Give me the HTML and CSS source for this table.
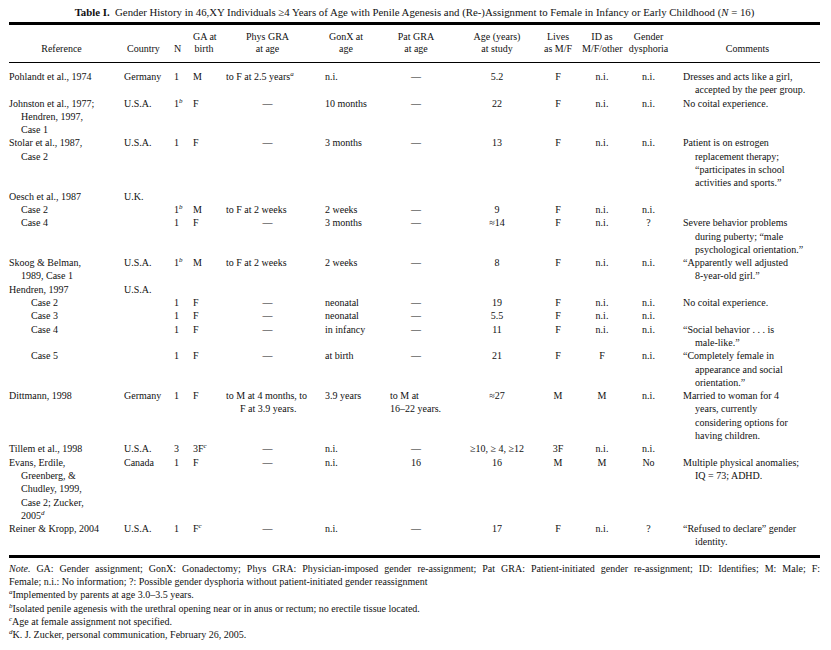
FILE: index.html
```html
<!DOCTYPE html>
<html lang="en">
<head>
    <meta charset="UTF-8">
    <title>Table I</title>
    <link rel="stylesheet" href="styles.css">
</head>

<body>

    <div class="m_page">
        <p class="m_title"><b>Table I.</b>&nbsp; Gender History in 46,XY Individuals &ge;4 Years of Age with Penile Agenesis and (Re-)Assignment to Female in Infancy or Early Childhood (<i>N</i> = 16)</p>

        <table class="m_table">
            <colgroup>
                <col class="c_ref"><col class="c_country"><col class="c_n"><col class="c_ga"><col class="c_phys"><col class="c_gonx">
                <col class="c_pat"><col class="c_age"><col class="c_lives"><col class="c_id"><col class="c_dys"><col class="c_com">
            </colgroup>
            <thead>
                <tr>
                    <th class="h_ref">Reference</th>
                    <th class="h_country">Country</th>
                    <th class="h_n">N</th>
                    <th>GA at<br>birth</th>
                    <th>Phys GRA<br>at age</th>
                    <th>GonX at<br>age</th>
                    <th>Pat GRA<br>at age</th>
                    <th>Age (years)<br>at study</th>
                    <th>Lives<br>as M/F</th>
                    <th>ID as<br>M/F/other</th>
                    <th>Gender<br>dysphoria</th>
                    <th>Comments</th>
                </tr>
            </thead>
            <tbody>
                <tr class="first">
                    <td class="hang">Pohlandt et al., 1974</td><td>Germany</td><td>1</td><td>M</td>
                    <td class="l">to F at 2.5 years<sup>a</sup></td><td class="g">n.i.</td><td class="c">&mdash;</td>
                    <td class="c">5.2</td><td class="c">F</td><td class="c">n.i.</td><td class="c">n.i.</td>
                    <td class="hang com">Dresses and acts like a girl,<br>accepted by the peer group.</td>
                </tr>
                <tr>
                    <td class="hang">Johnston et al., 1977;<br>Hendren, 1997,<br>Case 1</td><td>U.S.A.</td><td>1<sup>b</sup></td><td>F</td>
                    <td class="c">&mdash;</td><td class="g">10 months</td><td class="c">&mdash;</td>
                    <td class="c">22</td><td class="c">F</td><td class="c">n.i.</td><td class="c">n.i.</td>
                    <td class="hang com">No coital experience.</td>
                </tr>
                <tr>
                    <td class="hang">Stolar et al., 1987,<br>Case 2</td><td>U.S.A.</td><td>1</td><td>F</td>
                    <td class="c">&mdash;</td><td class="g">3 months</td><td class="c">&mdash;</td>
                    <td class="c">13</td><td class="c">F</td><td class="c">n.i.</td><td class="c">n.i.</td>
                    <td class="hang com">Patient is on estrogen<br>replacement therapy;<br>&ldquo;participates in school<br>activities and sports.&rdquo;</td>
                </tr>
                <tr>
                    <td class="hang">Oesch et al., 1987</td><td>U.K.</td><td></td><td></td>
                    <td></td><td></td><td></td><td></td><td></td><td></td><td></td><td></td>
                </tr>
                <tr>
                    <td class="sub">Case 2</td><td></td><td>1<sup>b</sup></td><td>M</td>
                    <td class="l">to F at 2 weeks</td><td class="g">2 weeks</td><td class="c">&mdash;</td>
                    <td class="c">9</td><td class="c">F</td><td class="c">n.i.</td><td class="c">n.i.</td>
                    <td></td>
                </tr>
                <tr>
                    <td class="sub">Case 4</td><td></td><td>1</td><td>F</td>
                    <td class="c">&mdash;</td><td class="g">3 months</td><td class="c">&mdash;</td>
                    <td class="c">&asymp;14</td><td class="c">F</td><td class="c">n.i.</td><td class="c">?</td>
                    <td class="hang com">Severe behavior problems<br>during puberty; &ldquo;male<br>psychological orientation.&rdquo;</td>
                </tr>
                <tr>
                    <td class="hang">Skoog &amp; Belman,<br>1989, Case 1</td><td>U.S.A.</td><td>1<sup>b</sup></td><td>M</td>
                    <td class="l">to F at 2 weeks</td><td class="g">2 weeks</td><td class="c">&mdash;</td>
                    <td class="c">8</td><td class="c">F</td><td class="c">n.i.</td><td class="c">n.i.</td>
                    <td class="hang com">&ldquo;Apparently well adjusted<br>8-year-old girl.&rdquo;</td>
                </tr>
                <tr>
                    <td class="hang">Hendren, 1997</td><td>U.S.A.</td><td></td><td></td>
                    <td></td><td></td><td></td><td></td><td></td><td></td><td></td><td></td>
                </tr>
                <tr>
                    <td class="sub2">Case 2</td><td></td><td>1</td><td>F</td>
                    <td class="c">&mdash;</td><td class="g">neonatal</td><td class="c">&mdash;</td>
                    <td class="c">19</td><td class="c">F</td><td class="c">n.i.</td><td class="c">n.i.</td>
                    <td class="hang com">No coital experience.</td>
                </tr>
                <tr>
                    <td class="sub2">Case 3</td><td></td><td>1</td><td>F</td>
                    <td class="c">&mdash;</td><td class="g">neonatal</td><td class="c">&mdash;</td>
                    <td class="c">5.5</td><td class="c">F</td><td class="c">n.i.</td><td class="c">n.i.</td>
                    <td></td>
                </tr>
                <tr>
                    <td class="sub2">Case 4</td><td></td><td>1</td><td>F</td>
                    <td class="c">&mdash;</td><td class="g">in infancy</td><td class="c">&mdash;</td>
                    <td class="c">11</td><td class="c">F</td><td class="c">n.i.</td><td class="c">n.i.</td>
                    <td class="hang com">&ldquo;Social behavior . . . is<br>male-like.&rdquo;</td>
                </tr>
                <tr>
                    <td class="sub2">Case 5</td><td></td><td>1</td><td>F</td>
                    <td class="c">&mdash;</td><td class="g">at birth</td><td class="c">&mdash;</td>
                    <td class="c">21</td><td class="c">F</td><td class="c">F</td><td class="c">n.i.</td>
                    <td class="hang com">&ldquo;Completely female in<br>appearance and social<br>orientation.&rdquo;</td>
                </tr>
                <tr>
                    <td class="hang">Dittmann, 1998</td><td>Germany</td><td>1</td><td>F</td>
                    <td class="l hang2">to M at 4 months, to<br>F at 3.9 years.</td><td class="g">3.9 years</td><td class="pat">to M at<br>16&ndash;22 years.</td>
                    <td class="c">&asymp;27</td><td class="c">M</td><td class="c">M</td><td class="c">n.i.</td>
                    <td class="hang com">Married to woman for 4<br>years, currently<br>considering options for<br>having children.</td>
                </tr>
                <tr>
                    <td class="hang">Tillem et al., 1998</td><td>U.S.A.</td><td>3</td><td>3F<sup>c</sup></td>
                    <td class="c">&mdash;</td><td class="g">n.i.</td><td class="c">&mdash;</td>
                    <td class="c">&ge;10, &ge; 4, &ge;12</td><td class="c">3F</td><td class="c">n.i.</td><td class="c">n.i.</td>
                    <td></td>
                </tr>
                <tr>
                    <td class="hang">Evans, Erdile,<br>Greenberg, &amp;<br>Chudley, 1999,<br>Case 2; Zucker,<br>2005<sup>d</sup></td><td>Canada</td><td>1</td><td>F</td>
                    <td class="c">&mdash;</td><td class="g">n.i.</td><td class="c">16</td>
                    <td class="c">16</td><td class="c">M</td><td class="c">M</td><td class="c">No</td>
                    <td class="hang com">Multiple physical anomalies;<br>IQ = 73; ADHD.</td>
                </tr>
                <tr class="last">
                    <td class="hang">Reiner &amp; Kropp, 2004</td><td>U.S.A.</td><td>1</td><td>F<sup>c</sup></td>
                    <td class="c">&mdash;</td><td class="g">n.i.</td><td class="c">&mdash;</td>
                    <td class="c">17</td><td class="c">F</td><td class="c">n.i.</td><td class="c">?</td>
                    <td class="hang com">&ldquo;Refused to declare&rdquo; gender<br>identity.</td>
                </tr>
            </tbody>
        </table>

        <div class="m_notes">
            <p class="full"><i>Note.</i> GA: Gender assignment; GonX: Gonadectomy; Phys GRA: Physician-imposed gender re-assignment; Pat GRA: Patient-initiated gender re-assignment; ID: Identifies; M: Male; F:</p>
            <p>Female; n.i.: No information; ?: Possible gender dysphoria without patient-initiated gender reassignment</p>
            <p><sup>a</sup>Implemented by parents at age 3.0&ndash;3.5 years.</p>
            <p><sup>b</sup>Isolated penile agenesis with the urethral opening near or in anus or rectum; no erectile tissue located.</p>
            <p><sup>c</sup>Age at female assignment not specified.</p>
            <p><sup>d</sup>K. J. Zucker, personal communication, February 26, 2005.</p>
        </div>
    </div>

</body>
</html>
```

FILE: styles.css
```css
* {margin: 0; padding: 0;}
body {background: #fff; color: #111; font-family: "Liberation Serif", "Times New Roman", serif; font-size: 10px;}
.m_page {width: 811px; padding: 5px 0 0 9px;}

.m_title {text-align: center; font-size: 10.8px; line-height: 14px; height: 17px;}

.m_table {width: 811px; table-layout: fixed; border-collapse: collapse;}
.m_table thead {border-top: 3px solid #000; border-bottom: 1px solid #000;}
.m_table tbody {border-bottom: 3px solid #000;}
.m_table th {font-weight: normal; text-align: center; vertical-align: bottom; line-height: 12px; padding: 6px 0 7px; white-space: nowrap;}
.m_table td {vertical-align: top; line-height: 13.3px; white-space: nowrap; text-align: left;}
.m_table tr.first td {padding-top: 7px;}
.m_table tr.last td {padding-bottom: 6px;}

.c_ref {width: 115px;}
.c_country {width: 50px;}
.c_n {width: 19px;}
.c_ga {width: 22px;}
.c_phys {width: 105px;}
.c_gonx {width: 52px;}
.c_pat {width: 88px;}
.c_age {width: 74px;}
.c_lives {width: 48px;}
.c_id {width: 40px;}
.c_dys {width: 53px;}
.c_com {width: 145px;}

.m_table th.h_ref {padding-right: 10px;}
.m_table th.h_country {text-align: left; padding-left: 3px;}
.m_table th.h_n {text-align: left;}

.m_table td.c {text-align: center;}
.m_table td.l {padding-left: 11px;}
.m_table td.g {padding-left: 5px;}
.m_table td.hang {padding-left: 12px; text-indent: -12px;}
.m_table td.hang2 {padding-left: 25px; text-indent: -14px;}
.m_table td.com {padding-left: 20px;}
.m_table td.sub {padding-left: 12px;}
.m_table td.sub2 {padding-left: 22px;}
.m_table td.pat {padding-left: 18px;}

sup {font-size: 7px; line-height: 0; vertical-align: 4px; font-style: italic;}

.m_notes {padding-top: 4px;}
.m_notes p {line-height: 13.3px;}
.m_notes p.full {text-align: justify; text-align-last: justify;}
```
